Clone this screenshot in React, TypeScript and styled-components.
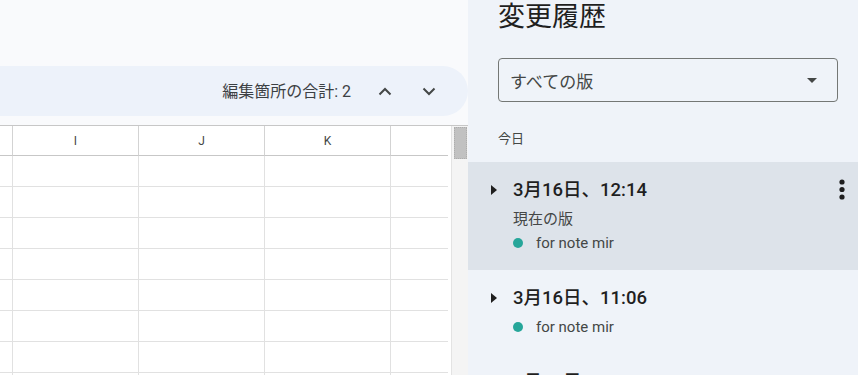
import styled, { createGlobalStyle } from "styled-components";

const GlobalStyle = createGlobalStyle`
  html, body {
    margin: 0;
    padding: 0;
    overflow: hidden;
  }
  body {
    font-family: Roboto, "Noto Sans CJK JP", sans-serif;
    color: #1f1f1f;
  }
`;

const COLUMNS = ["", "I", "J", "K", ""];
const ROW_COUNT = 8;

type Version = {
    date: string,
    current?: boolean,
    author: string,
}

const versions: Version[] = [
    { date: "3月16日、12:14", current: true, author: "for note mir" },
    { date: "3月16日、11:06", author: "for note mir" },
    { date: "3月16日、10:52", author: "for note mir" },
];

export default function App() {
    return (
        <>
            <GlobalStyle />
            <Screen>
                <SheetSide>
                    <TopSpace />
                    <FindBar>
                        <FindCount>編集箇所の合計: 2</FindCount>
                        <NavButton aria-label="前へ">
                            <svg width="14" height="9" viewBox="0 0 14 9">
                                <path d="M1.5 7.5L7 2l5.5 5.5" fill="none" stroke="#444746" strokeWidth="2" />
                            </svg>
                        </NavButton>
                        <NavButton aria-label="次へ">
                            <svg width="14" height="9" viewBox="0 0 14 9">
                                <path d="M1.5 1.5L7 7l5.5-5.5" fill="none" stroke="#444746" strokeWidth="2" />
                            </svg>
                        </NavButton>
                    </FindBar>
                    <GridArea>
                        <Grid>
                            {COLUMNS.map((c, i) => (
                                <HeaderCell key={"h" + i} $last={i === COLUMNS.length - 1}>{c}</HeaderCell>
                            ))}
                            {Array.from({ length: ROW_COUNT }).map((_, r) =>
                                COLUMNS.map((_, i) => (
                                    <Cell key={r + "-" + i} $last={i === COLUMNS.length - 1} />
                                ))
                            )}
                        </Grid>
                        <Scrollbar>
                            <Thumb />
                        </Scrollbar>
                    </GridArea>
                </SheetSide>

                <HistoryPanel>
                    <PanelTitle>変更履歴</PanelTitle>
                    <Select>
                        <span>すべての版</span>
                        <svg width="10" height="5" viewBox="0 0 10 5">
                            <path d="M0 0h10L5 5z" fill="#444746" />
                        </svg>
                    </Select>
                    <DayLabel>今日</DayLabel>
                    {versions.map((v) => (
                        <VersionItem key={v.date} $selected={!!v.current}>
                            <Expander>
                                <svg width="6" height="10" viewBox="0 0 6 10">
                                    <path d="M0 0l6 5-6 5z" fill="#1f1f1f" />
                                </svg>
                            </Expander>
                            <VersionBody>
                                <VersionDate>{v.date}</VersionDate>
                                {v.current && <SubLine>現在の版</SubLine>}
                                <SubLine>
                                    <AuthorDot />
                                    {v.author}
                                </SubLine>
                            </VersionBody>
                            {v.current && (
                                <MoreButton aria-label="その他の操作">
                                    <svg width="6" height="22" viewBox="0 0 6 22">
                                        <circle cx="3" cy="3" r="2.6" fill="#1f1f1f" />
                                        <circle cx="3" cy="10.5" r="2.6" fill="#1f1f1f" />
                                        <circle cx="3" cy="18" r="2.6" fill="#1f1f1f" />
                                    </svg>
                                </MoreButton>
                            )}
                        </VersionItem>
                    ))}
                </HistoryPanel>
            </Screen>
        </>
    );
}

const Screen = styled.div`
    display: flex;
    width: 858px;
    height: 375px;
    overflow: hidden;
`;

const SheetSide = styled.div`
    display: flex;
    flex-direction: column;
    width: 468px;
    flex-shrink: 0;
    background: #f9fafc;

    & > * {
        flex-shrink: 0;
    }
`;

const TopSpace = styled.div`
    height: 66px;
`;

const FindBar = styled.div`
    display: flex;
    align-items: center;
    justify-content: flex-end;
    height: 50px;
    padding-right: 17px;
    background: #edf2fa;
    border-radius: 0 25px 25px 0;
`;

const FindCount = styled.span`
    font-size: 16px;
    color: #3c4043;
    margin-right: 12px;
    margin-top: -2px;
`;

const NavButton = styled.button`
    display: flex;
    align-items: center;
    justify-content: center;
    width: 44px;
    height: 40px;
    padding: 0;
    border: none;
    background: transparent;
`;

const GridArea = styled.div`
    display: flex;
    margin-top: 9px;
    height: 260px;
    background: #ffffff;
    border-top: 1px solid #c7c7c7;
`;

const Grid = styled.div`
    display: grid;
    grid-template-columns: 13px 126px 126px 126px 57px;
    grid-auto-rows: 31px;
    grid-template-rows: 30px;
    width: 448px;
    margin-right: 3px;
    align-content: start;
`;

const HeaderCell = styled.div<{ $last: boolean }>`
    display: flex;
    align-items: center;
    justify-content: center;
    font-family: Roboto, Arial, sans-serif;
    font-size: 12px;
    color: #444746;
    border-right: ${(p) => (p.$last ? "none" : "1px solid #d3d3d3")};
    border-bottom: 1px solid #c7c7c7;
`;

const Cell = styled.div<{ $last: boolean }>`
    border-right: ${(p) => (p.$last ? "none" : "1px solid #e1e1e1")};
    border-bottom: 1px solid #e1e1e1;
`;

const Scrollbar = styled.div`
    width: 16px;
    border-left: 1px solid #e3e3e3;
    background: #f4f4f4;
`;

const Thumb = styled.div`
    width: 13px;
    height: 32px;
    margin: 1px 0 0 2px;
    background: #c1c1c1;
    border: 1px dotted #adadad;
    box-sizing: border-box;
`;

const HistoryPanel = styled.div`
    flex: 1;
    display: flex;
    flex-direction: column;
    background: #eff3f9;

    & > * {
        flex-shrink: 0;
    }
`;

const PanelTitle = styled.h2`
    margin: 0 0 0 30px;
    font-size: 27px;
    font-weight: 400;
    line-height: 35px;
    color: #1f1f1f;
`;

const Select = styled.div`
    display: flex;
    align-items: center;
    justify-content: space-between;
    width: 340px;
    height: 44px;
    margin: 23px 0 0 30px;
    padding: 0 20px 0 11px;
    box-sizing: border-box;
    border: 1px solid #747775;
    border-radius: 4px;
    font-size: 17px;
    color: #444746;
`;

const DayLabel = styled.div`
    margin: 27px 0 0 30px;
    font-size: 13px;
    line-height: 20px;
    color: #444746;
`;

const VersionItem = styled.div<{ $selected: boolean }>`
    display: flex;
    align-items: flex-start;
    margin-top: ${(p) => (p.$selected ? "13px" : "0")};
    padding: 16px 0 15px 0;
    background: ${(p) => (p.$selected ? "#dde3ea" : "transparent")};
`;

const Expander = styled.div`
    display: flex;
    align-items: center;
    width: 45px;
    height: 24px;
    padding-left: 23px;
    box-sizing: border-box;
`;

const VersionBody = styled.div`
    flex: 1;
    display: flex;
    flex-direction: column;
`;

const VersionDate = styled.div`
    font-size: 18.5px;
    font-weight: 500;
    line-height: 24px;
    color: #1f1f1f;
    margin-bottom: 5px;
`;

const SubLine = styled.div`
    display: flex;
    align-items: center;
    font-size: 15px;
    line-height: 24px;
    color: #444746;
`;

const AuthorDot = styled.span`
    width: 10px;
    height: 10px;
    border-radius: 50%;
    background: #26a69a;
    margin-right: 13px;
`;

const MoreButton = styled.button`
    display: flex;
    align-items: center;
    justify-content: center;
    width: 32px;
    height: 24px;
    padding: 0;
    border: none;
    background: transparent;
`;
